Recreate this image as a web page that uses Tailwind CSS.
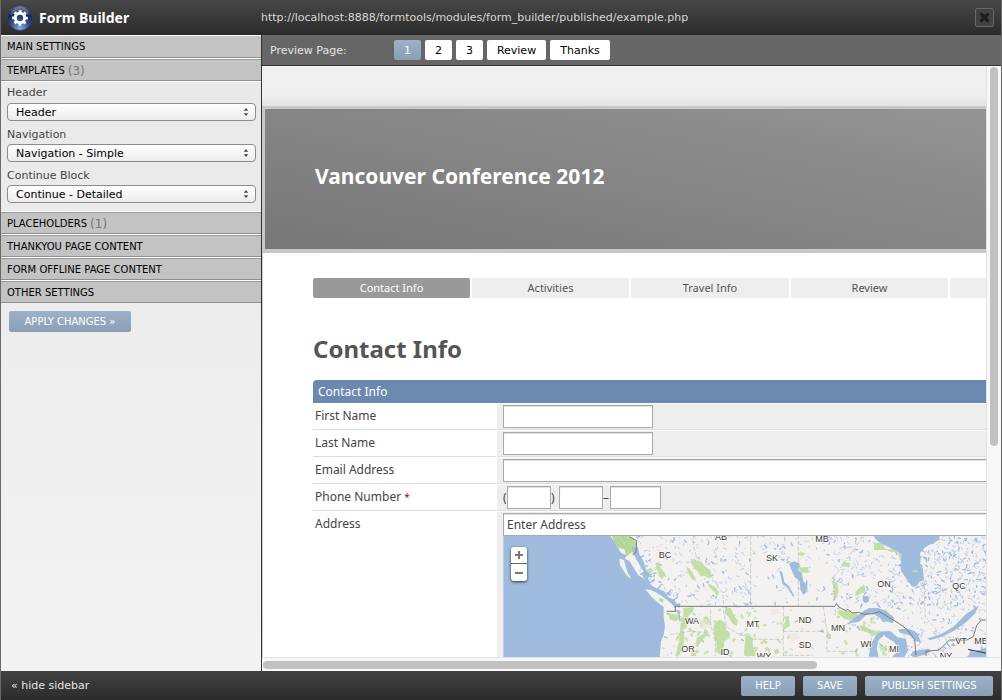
<!DOCTYPE html>
<html lang="en">
<head>
<meta charset="utf-8">
<title>Form Builder</title>
<script src="https://cdn.jsdelivr.net/npm/@tailwindcss/browser@4"></script>
</head>
<body class="flex h-screen flex-col overflow-hidden border-x border-[#6a6a6a] bg-[#f0f0f0] font-['DejaVu_Sans',sans-serif] text-[11px] text-black">

<header class="flex h-[35px] shrink-0 items-center bg-linear-to-b from-[#484848] to-[#2b2b2b] pr-[7px] pl-[6px]">
  <div class="flex w-[254px] shrink-0 items-center gap-[6px]">
    <svg class="size-[26px]" viewBox="0 0 26 26" aria-hidden="true">
      <defs>
        <radialGradient id="orb" cx="50%" cy="95%" r="95%"><stop offset="0" stop-color="#8fb0ea"/><stop offset=".4" stop-color="#34508f"/><stop offset=".75" stop-color="#16224f"/><stop offset="1" stop-color="#5f7099"/></radialGradient>
      </defs>
      <circle cx="13" cy="13" r="12.3" fill="url(#orb)" stroke="#33436f" stroke-width=".6"/>
      <path d="M3 10C5 3.500 10 1.500 13 1.500S21 3.500 23 10C18 7.500 8 7.500 3 10Z" fill="#a9b8dc" opacity=".35"/>
      <circle cx="13" cy="13" r="4.700" fill="none" stroke="#fff" stroke-width="3"/>
      <circle cx="13" cy="13" r="6.800" fill="none" stroke="#fff" stroke-width="2" stroke-dasharray="2.900 2.440" stroke-dashoffset="1.450"/>
    </svg>
    <h1 class="text-[14px] font-bold text-white font-['Noto_Sans','DejaVu_Sans',sans-serif]">Form Builder</h1>
  </div>
  <p class="flex-1 pt-px text-[#d8d8d8]">http://localhost:8888/formtools/modules/form_builder/published/example.php</p>
  <button type="button" aria-label="Close" class="flex size-[19px] items-center justify-center rounded-[2px] border border-[#686868] bg-[#424242]">
    <svg class="size-[11px]" viewBox="0 0 11 11"><path d="M2.500 2.500 8.500 8.500M8.500 2.500 2.500 8.500" stroke="#1d1d1d" stroke-width="3.200" stroke-linecap="round"/></svg>
  </button>
</header>

<main class="flex min-h-0 flex-1">
  <aside class="w-[261px] shrink-0 border-r border-[#333] bg-linear-to-b from-[#e8e8e8] to-[#f3f3f3]">
    <h2 class="flex h-[23px] items-center border-t border-b border-t-white border-b-[#8f8f8f] bg-[#c3c3c3] pl-[6px] text-[10px]">MAIN SETTINGS</h2>
    <h2 class="flex h-[23px] items-center gap-[3px] border-t border-b border-t-white border-b-[#8f8f8f] bg-[#c3c3c3] pt-[2px] pl-[6px] text-[10px] shadow-[inset_0_1px_0_#999]">TEMPLATES <span class="text-[12px] leading-[16px] text-[#777]">(3)</span></h2>
    <div class="flex flex-col gap-[3px] border-t border-white px-[6px] pt-px pb-[8px]">
      <div>
        <label for="t1" class="block h-[20px] leading-[20px] text-[#444]">Header</label>
        <div class="relative">
          <select id="t1" class="block h-[18px] w-[249px] appearance-none rounded-[4px] border border-[#8c8c8c] bg-linear-to-b from-white to-[#ececec] pt-px pl-[8px] text-[11px] leading-[16px]"><option>Header</option></select>
          <svg class="pointer-events-none absolute top-[5px] right-[6px] h-[8px] w-[6px]" viewBox="0 0 6 9"><path d="M3 0 5.500 3.200H.5ZM3 9 .5 5.800h5Z" fill="#444"/></svg>
        </div>
      </div>
      <div>
        <label for="t2" class="block h-[20px] leading-[22px] text-[#444]">Navigation</label>
        <div class="relative">
          <select id="t2" class="block h-[18px] w-[249px] appearance-none rounded-[4px] border border-[#8c8c8c] bg-linear-to-b from-white to-[#ececec] pt-px pl-[8px] text-[11px] leading-[16px]"><option>Navigation - Simple</option></select>
          <svg class="pointer-events-none absolute top-[5px] right-[6px] h-[8px] w-[6px]" viewBox="0 0 6 9"><path d="M3 0 5.500 3.200H.5ZM3 9 .5 5.800h5Z" fill="#444"/></svg>
        </div>
      </div>
      <div>
        <label for="t3" class="block h-[20px] leading-[22px] text-[#444]">Continue Block</label>
        <div class="relative">
          <select id="t3" class="block h-[18px] w-[249px] appearance-none rounded-[4px] border border-[#8c8c8c] bg-linear-to-b from-white to-[#ececec] pt-px pl-[8px] text-[11px] leading-[16px]"><option>Continue - Detailed</option></select>
          <svg class="pointer-events-none absolute top-[5px] right-[6px] h-[8px] w-[6px]" viewBox="0 0 6 9"><path d="M3 0 5.500 3.200H.5ZM3 9 .5 5.800h5Z" fill="#444"/></svg>
        </div>
      </div>
    </div>
    <h2 class="flex h-[23px] items-center gap-[3px] border-t border-b border-t-white border-b-[#8f8f8f] bg-[#c3c3c3] pt-[2px] pl-[6px] text-[10px] shadow-[inset_0_1px_0_#999]">PLACEHOLDERS <span class="text-[12px] leading-[16px] text-[#777]">(1)</span></h2>
    <h2 class="flex h-[23px] items-center border-t border-b border-t-white border-b-[#8f8f8f] bg-[#c3c3c3] pt-[2px] pl-[6px] text-[10px] shadow-[inset_0_1px_0_#999]">THANKYOU PAGE CONTENT</h2>
    <h2 class="flex h-[23px] items-center border-t border-b border-t-white border-b-[#8f8f8f] bg-[#c3c3c3] pt-[2px] pl-[6px] text-[10px] shadow-[inset_0_1px_0_#999]">FORM OFFLINE PAGE CONTENT</h2>
    <h2 class="flex h-[23px] items-center border-t border-b border-t-white border-b-[#8f8f8f] bg-[#c3c3c3] pt-[2px] pl-[6px] text-[10px] shadow-[inset_0_1px_0_#999]">OTHER SETTINGS</h2>
    <button type="button" class="mt-[8px] ml-[8px] h-[21px] w-[122px] rounded-[2px] bg-linear-to-b from-[#9db1c8] to-[#8a9fb6] text-[10px] text-white">APPLY CHANGES »</button>
  </aside>

  <section class="flex min-w-0 flex-1 flex-col">
    <nav class="flex h-[31px] shrink-0 items-center gap-[4px] border-b border-[#333] bg-[#666] pl-[8px]">
      <span class="w-[120px] pt-[2px] text-[#e4e4e4]">Preview Page:</span>
      <button type="button" class="h-[20px] w-[27px] rounded-[2px] bg-linear-to-b from-[#9db1c8] to-[#8a9fb6] pt-[2px] text-white">1</button>
      <button type="button" class="h-[20px] w-[27px] rounded-[2px] bg-white pt-[2px]">2</button>
      <button type="button" class="h-[20px] w-[27px] rounded-[2px] bg-white pt-[2px]">3</button>
      <button type="button" class="h-[20px] w-[59px] rounded-[2px] bg-white pt-[2px]">Review</button>
      <button type="button" class="h-[20px] w-[60px] rounded-[2px] bg-white pt-[2px]">Thanks</button>
    </nav>

    <div class="flex min-h-0 flex-1">
      <div class="flex min-w-0 flex-1 flex-col overflow-hidden bg-white font-['Noto_Sans',sans-serif] text-[12px] text-[#444]">
        <div class="h-[40px] shrink-0 bg-linear-to-b from-[#f0f0f0] from-70% to-[#e4e4e4]"></div>
        <div class="flex h-[147px] shrink-0 items-center border-t-[3px] border-b-4 border-l-[3px] border-[#c8c8c8] bg-linear-to-tr from-[#777] to-[#949494] pl-[50px]">
          <h2 class="pb-[5px] text-[21px] font-bold text-white">Vancouver Conference 2012</h2>
        </div>
        <div class="flex min-h-0 flex-1 flex-col border-l border-[#ccc] pl-[50px]">
          <div class="mt-[25px] flex shrink-0 gap-[2px] text-[11px] leading-[20px]">
            <a href="#" class="h-[20px] w-[157px] shrink-0 rounded-[2px] bg-[#999] text-center text-white">Contact Info</a>
            <a href="#" class="h-[20px] w-[157px] shrink-0 rounded-[2px] bg-[#eee] text-center text-[#555]">Activities</a>
            <a href="#" class="h-[20px] w-[158px] shrink-0 rounded-[2px] bg-[#eee] text-center text-[#555]">Travel Info</a>
            <a href="#" class="h-[20px] w-[157px] shrink-0 rounded-[2px] bg-[#eee] text-center text-[#555]">Review</a>
            <span class="h-[20px] w-[157px] shrink-0 rounded-[2px] bg-[#eee]"></span>
          </div>
          <h2 class="mt-[34px] h-[34px] shrink-0 text-[24px] leading-[34px] font-bold text-[#555]">Contact Info</h2>
          <h3 class="mt-[14px] h-[23px] shrink-0 rounded-tl-[4px] bg-[#6b89af] pl-[5px] leading-[23px] text-white">Contact Info</h3>
          <div class="grid min-h-0 flex-1 grid-cols-[183px_minmax(0,1fr)] grid-rows-[27px_27px_27px_27px_minmax(0,1fr)] gap-x-px">
            <label for="fn" class="border-b border-[#ddd] pl-[2px] leading-[26px]">First Name</label>
            <div class="border-t border-b border-t-white border-b-[#ddd] bg-[#eee] pt-px pl-[6px]"><input id="fn" type="text" class="block h-[23px] w-[150px] border border-[#aaa] bg-white px-[3px] shadow-[inset_0_1px_1px_#ddd]"></div>
            <label for="ln" class="border-b border-[#ddd] pl-[2px] leading-[26px]">Last Name</label>
            <div class="border-t border-b border-t-white border-b-[#ddd] bg-[#eee] pt-px pl-[6px]"><input id="ln" type="text" class="block h-[23px] w-[150px] border border-[#aaa] bg-white px-[3px] shadow-[inset_0_1px_1px_#ddd]"></div>
            <label for="em" class="border-b border-[#ddd] pl-[2px] leading-[26px]">Email Address</label>
            <div class="border-t border-b border-t-white border-b-[#ddd] bg-[#eee] pt-px pl-[6px]"><input id="em" type="text" class="block h-[23px] w-full border border-r-0 border-[#aaa] bg-white px-[3px] shadow-[inset_0_1px_1px_#ddd]"></div>
            <label for="ph" class="border-b border-[#ddd] pl-[2px] leading-[26px]">Phone Number <span class="text-[10px] text-[#b00]">*</span></label>
            <div class="flex border-t border-b border-t-white border-b-[#ddd] bg-[#eee] pt-px pl-[6px] leading-[23px]">
              <span class="w-[4px]">(</span><input id="ph" type="text" class="h-[23px] w-[44px] border border-[#aaa] bg-white shadow-[inset_0_1px_1px_#ddd]"><span class="w-[8px]">)</span><input type="text" aria-label="Phone prefix" class="h-[23px] w-[44px] border border-[#aaa] bg-white shadow-[inset_0_1px_1px_#ddd]"><span class="w-[7px]">–</span><input type="text" aria-label="Phone line" class="h-[23px] w-[51px] border border-[#aaa] bg-white shadow-[inset_0_1px_1px_#ddd]">
            </div>
            <label for="ad" class="pl-[2px] leading-[26px]">Address</label>
            <div class="flex min-h-0 flex-col border-t border-white bg-[#eee] pt-px pl-[6px]">
              <input id="ad" type="text" value="Enter Address" class="block h-[23px] w-full shrink-0 border border-r-0 border-[#aaa] bg-white px-[3px] shadow-[inset_0_1px_1px_#ddd]">
              <div class="relative min-h-0 flex-1 overflow-hidden bg-[#f3f2f0]">
                <svg id="map" class="absolute inset-0 size-full" viewBox="0 0 484 121" preserveAspectRatio="xMinYMin slice" role="img" aria-label="Map of North America">
                  <g transform="translate(-13 -26) scale(.33333)">
                    <rect x="0" y="0" width="1500" height="460" fill="#f3f2f0"/>
                    <g id="parks" fill="none" stroke="#c9e2ae" stroke-linecap="round"></g>
                    <g id="lakes" fill="none" stroke="#9dbbe4" stroke-linecap="round"></g>
                    <g fill="#c3dfa5">
                      <path d="M600 145l14 8 12-2 14 14 10 8 12 8 2 20-8 4-14-8-10 2-8-14-12-10-6-14zM588 170l12 6 12 20 8 18-14-6-10-16zM496 160l12-4 4 18 14 16-8 18-10-8-6-18zM650 215l14 10 14 8 6 14-12-2-14-14zM678 240l8 4-2 14-8-6zM470 178l14-4 6 8-12 10-8-2zM508 262l12 4-2 10-10-4z"/>
                      <path d="M535 310l28 4 8 12-14 8-18-6zM580 294l32-2-2 12-14 12-8 26-8 18 4 26-6 30-14 24-8-2 10-40 4-30 2-30 8-22zM676 335l16-6 14 10 4 22 10 8-2 16-14 6-4 24 8 14-12 8-18-12 2-30-8-22-2-20zM706 292l16 2 10 24 12 14-4 16-14-8-10-18-12-12zM620 384l20-12 4-16 10 6-2 14-16 14-12 20-8-2zM640 322l14-2 8 16-8 10-10-6zM605 420l18 4-6 14h-14z"/>
                      <path d="M927 172h28v16h-24zM1058 158h22l-2 14-22-4zM1152 98l24 0 10 18 20 2 22-6 26 8 0 32-24 0-6-26-20 0-14-6-38 0zM930 236l20 2 6 8-20-2zM925 128l20 0-6 10-14-2zM1024 210l18 10 4 22-8 26-8-2 2-30zM1096 246l26-24 4 18-20 16-10 2zM880 320l16-2 4 30-14 8-4-14 6-8zM1044 300l34 4 28 12 8 16-20-6-30 2-14-12zM850 422l14-6 6 12-14 4zM766 376l22 6 2 44-16 14-12-4zM778 408l16 8 2 22h-20zM1110 345l20 10 40 12 8 14-26-6-40-14zM1180 310l30 8 2 16-20-4zM1178 410l10-4 4 14-10 8zM1010 368l14 6-2 10-14-4z"/>
                    </g>
                    <g fill="#e9e4d8" opacity=".5"><path d="M610 322l40 4 20 20-30 10zM890 372l30-4 14 16-30 12zM840 300l22-4 10 14-24 4z"/></g>
                    <path d="M40 70H357l8 14 18 28 10 16 16 8-4 10 14 8 12 20 14 22 14 8 16 18 22 12 26 10 10 16 20 10 10 16-10 10-8-10-20-6-12-4 8 14 0 30 4 28-4 26-8 20-4 48H40Z" fill="#9fbcde"/>
                    <path d="M388 146l14 4 4 16 8 24 10 16-14-8-12-20-8-14zM466 238l18 2 18 10 22 14 22 18 12 18-6 6-22-8-24-18-22-20z" fill="#f3f2f0"/>
                    <path d="M365 76l10 26 12 12 16 4 6 22 12-10 10-4 8-26-6-12-24-12z" fill="#b6d996"/>
                    <path d="M368 88l20 24m-4-26 16 26m-2-34 18 40" stroke="#9fbcde" stroke-width="2"/>
                    <path d="M404 188l8 8 8 12-8-8zM508 264l12 4 0 10-12-4z" fill="#b6d996"/>
                    <path d="M426 112l4 20 14 24 16 28-4 8 14 34 20 10 28 24 24 12 26 22 4-14-14 2-20-16-22-8-20-24-14-8-8-22 8-6-14-18-8-28-12-20-4-20z" fill="#9fbcde"/>
                    <path d="M440 150l22-14M452 176l20-10M462 200l24-8M476 220l18-12M500 240l14-16M530 256l14-18M548 272l16-12M566 300l4 34M560 300l8 16" fill="none" stroke="#9fbcde" stroke-width="4"/>
                    <g fill="#9fbcde">
                      <path d="M1138 70H1352q-4 24-28 32-22 8-34 28 2 12 0 30l8 14 4 36-14 6-8 12-14 2-18-26-16-22 2-50-20-12-38-18q-18-8-30-32z"/>
                      <path d="M1066 346l30-24 26-20 16-8 26 0 26 10 22 20-4 16-26-8-36-24-18 8-22 20-20 2zM1136 440l6-36 16-28 16-12 18 2-8 8-18 16-6 26 6 24zM1180 364h22l20 18 26 4 6 36-12 20h-18l2-30-14-16-26-16zM1224 358q44-4 58 12l12 30-16-8-14-14-34-10zM1208 438l12-10 14 2v12h-26zM1260 436l10-12 46-8 8 6-20 12-30 8zM1310 386l44-14 36-22 36-36 40-28-10 24-30 28-34 24-36 18-34 10zM1440 430l50-18v32h-60z"/>
                      <path d="M897 160l16-6 16 6-4 20 10 10 6 26 6 2 2 30-10 6-8-18-2-22-16-14-10-24zM930 206l6-4-2 24zM867 180l10 8 6 28 14 12 16 30-4 2-18-28-14-10-4-22zM870 148l14-2-2 8zM948 210l4 2 0 30-4-6zM1118 258h16l4 16-12 6-8-8z"/>
                    </g>
                    <path d="M1264 182l16-2 4 8-12-2z" fill="#c3dfa5"/>
                    <g fill="none" stroke="#b9b9b9" stroke-width="2" stroke-dasharray="12 5">
                      <path d="M610 76v30l8 30 30 40 50 74 4 38M782 76v212M925 76v212M880 290v148M880 364h120M788 388h92M1000 290l12 80-2 54M1010 424h92M662 300v50l14 30v58M540 374l60-10 60 4M880 436h90M1148 430l-6-70-70-20M1034 270l-2-70 90-124M1302 210l4 110 50 60 44 4M700 300l10 50 40 26h38"/>
                    </g>
                    <g fill="none" stroke="#777" stroke-width="3">
                      <path d="M418 80l22 12-2 34-10 8M556 306v-17H1034l6-8 6 10 20 10 8-2 14 10 18-2 16 6 28-2 18-6 60 36 24 18 22 30 4 46M1308 438v-14l40-4 30-30h52l20-10 10-34 14-16h12M530 304h26"/>
                      <path d="M1434 418l56 12" stroke="#333"/>
                    </g>
                  </g>
                  <g font-family="'Liberation Sans',sans-serif" font-size="9" fill="#3f372f" stroke="#fff" stroke-width="1.500" stroke-opacity=".75" paint-order="stroke" text-anchor="middle">
                    <text x="162" y="22">BC</text><text x="218" y="4">AB</text><text x="269" y="25">SK</text><text x="319" y="6">MB</text><text x="381" y="51">ON</text><text x="456" y="53">QC</text><text x="189" y="88">WA</text><text x="250" y="91">MT</text><text x="302" y="87">ND</text><text x="335" y="95">MN</text><text x="302" y="112">SD</text><text x="363" y="111">WI</text><text x="391" y="116">MI</text><text x="458" y="108">VT</text><text x="478" y="108">ME</text><text x="185" y="116">OR</text><text x="222" y="119">ID</text><text x="261" y="123">WY</text><text x="443" y="123">NY</text>
                  </g>
                </svg>
                <div class="absolute top-[11px] left-[8px] flex w-[16px] flex-col rounded-[3px] bg-white shadow-[0_1px_3px_#333]">
                  <button type="button" aria-label="Zoom in" class="flex h-[17px] items-center justify-center border-b border-[#666]"><svg class="size-[8px]" viewBox="0 0 8 8"><path d="M4 0v8M0 4h8" stroke="#777" stroke-width="2"/></svg></button>
                  <button type="button" aria-label="Zoom out" class="flex h-[17px] items-center justify-center"><svg class="size-[8px]" viewBox="0 0 8 8"><path d="M0 4h8" stroke="#777" stroke-width="2"/></svg></button>
                </div>
              </div>
            </div>
          </div>
        </div>
      </div>
      <div class="w-[15px] shrink-0 border-l border-[#e2e2e2] bg-[#f8f8f8] pt-px pl-[3px]"><div class="h-[379px] w-[8px] rounded-full bg-[#c1c1c1]"></div></div>
    </div>
    <div class="h-[14px] shrink-0 border-t border-[#e2e2e2] bg-[#f8f8f8] pt-[3px] pl-px"><div class="h-[8px] w-3/4 rounded-full bg-[#c1c1c1]"></div></div>
  </section>
</main>

<footer class="flex h-[29px] shrink-0 items-center gap-[8px] bg-linear-to-b from-[#424242] to-[#2b2b2b] pr-[8px] pl-[10px] text-white">
  <a href="#" class="flex-1 pt-[2px] text-[#e4e4e4]">« hide sidebar</a>
  <button type="button" class="h-[20px] w-[54px] rounded-[2px] bg-linear-to-b from-[#9db1c8] to-[#8a9fb6] text-[10px]">HELP</button>
  <button type="button" class="h-[20px] w-[54px] rounded-[2px] bg-linear-to-b from-[#9db1c8] to-[#8a9fb6] text-[10px]">SAVE</button>
  <button type="button" class="h-[20px] w-[128px] rounded-[2px] bg-linear-to-b from-[#9db1c8] to-[#8a9fb6] text-[10px]">PUBLISH SETTINGS</button>
</footer>

<script>
  // Scatter small lakes and parks over the land, denser in the north and east.
  let seed = 7;
  const rnd = () => (seed = (seed * 16807) % 2147483647) / 2147483647;
  let thin = '', thick = '', green = '';
  for (let i = 0; i < 3200; i++) {
    const x = 440 + rnd() * 1060, y = 76 + rnd() * 364;
    const density = y > 290 ? (x > 1240 ? .4 : .08) : x > 1290 ? 1 : x > 1030 ? .6 : x > 780 && y > 150 ? .1 : .4;
    if (rnd() > density) continue;
    const d = `M${x | 0} ${y | 0}l${(rnd() * 14 - 4) | 0} ${(rnd() * 16 - 6) | 0}`;
    if (rnd() > .75) thick += d; else thin += d;
  }
  for (let i = 0; i < 110; i++) {
    const x = 560 + rnd() * 640, y = 300 + rnd() * 138;
    if (x > 900 && x < 1030) continue;
    green += `M${x | 0} ${y | 0}l${(rnd() * 12 - 6) | 0} ${(rnd() * 14 - 4) | 0}`;
  }
  document.getElementById('lakes').innerHTML = `<path d="${thin}" stroke-width="2"/><path d="${thick}" stroke-width="4"/>`;
  document.getElementById('parks').innerHTML = `<path d="${green}" stroke-width="7"/>`;
</script>
</body>
</html>
